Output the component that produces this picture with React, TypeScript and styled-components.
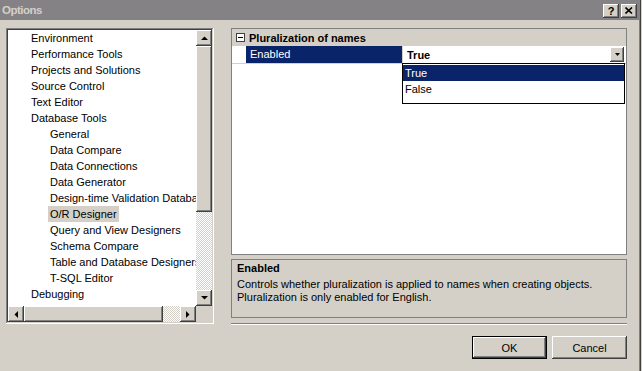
import styled, { createGlobalStyle } from "styled-components";

const GlobalStyle = createGlobalStyle`
  html, body {
    margin: 0;
    padding: 0;
    background: #d4d0c8;
  }
  body {
    font-family: "Liberation Sans", Arial, sans-serif;
    font-size: 11px;
    color: #000;
  }
`;

const raised = `
  background: #d4d0c8;
  box-shadow: inset -1px -1px #404040, inset 1px 1px #fff, inset -2px -2px #808080, inset 2px 2px #d4d0c8;
`;

const treeItems = [
    { label: "Environment", level: 0 },
    { label: "Performance Tools", level: 0 },
    { label: "Projects and Solutions", level: 0 },
    { label: "Source Control", level: 0 },
    { label: "Text Editor", level: 0 },
    { label: "Database Tools", level: 0 },
    { label: "General", level: 1 },
    { label: "Data Compare", level: 1 },
    { label: "Data Connections", level: 1 },
    { label: "Data Generator", level: 1 },
    { label: "Design-time Validation Database", level: 1 },
    { label: "O/R Designer", level: 1, selected: true },
    { label: "Query and View Designers", level: 1 },
    { label: "Schema Compare", level: 1 },
    { label: "Table and Database Designers", level: 1 },
    { label: "T-SQL Editor", level: 1 },
    { label: "Debugging", level: 0 },
];

function Arrow({ dir }: { dir: "up" | "down" | "left" | "right" }) {
    const pts = {
        up: "0,4 7,4 3.5,0.5",
        down: "0,0 7,0 3.5,3.5",
        left: "4,0 4,7 0.5,3.5",
        right: "0,0 0,7 3.5,3.5",
    }[dir];
    const vertical = dir === "up" || dir === "down";
    return (
        <svg width={vertical ? 7 : 4} height={vertical ? 4 : 7} viewBox={vertical ? "0 0 7 4" : "0 0 4 7"}>
            <polygon points={pts} fill="#000" />
        </svg>
    );
}

export default function App() {
    return (
        <>
            <GlobalStyle />
            <Window>
                <TitleBar>
                    <Title>Options</Title>
                    <CaptionButtons>
                        <CaptionButton>?</CaptionButton>
                        <CaptionButton>
                            <svg width="8" height="7" viewBox="0 0 8 7">
                                <path d="M0.5 0.5 L7 6.5 M7 0.5 L0.5 6.5" stroke="#000" strokeWidth="1.6" />
                            </svg>
                        </CaptionButton>
                    </CaptionButtons>
                </TitleBar>
                <Body>
                    <MainRow>
                        <TreeBox>
                            <TreeList>
                                {treeItems.map((item) => (
                                    <TreeRow key={item.label} $level={item.level}>
                                        <TreeLabel $selected={!!item.selected}>{item.label}</TreeLabel>
                                    </TreeRow>
                                ))}
                            </TreeList>
                            <VScroll>
                                <ScrollButton><Arrow dir="up" /></ScrollButton>
                                <VThumb />
                                <Track />
                                <ScrollButton><Arrow dir="down" /></ScrollButton>
                            </VScroll>
                            <HScroll>
                                <ScrollButton><Arrow dir="left" /></ScrollButton>
                                <HThumb />
                                <Track />
                                <ScrollButton><Arrow dir="right" /></ScrollButton>
                            </HScroll>
                            <Corner />
                        </TreeBox>
                        <RightColumn>
                            <PropertyGrid>
                                <CategoryRow>
                                    <Expander>
                                        <svg width="9" height="9" viewBox="0 0 9 9">
                                            <rect x="0.5" y="0.5" width="8" height="8" fill="#fff" stroke="#404040" />
                                            <path d="M2 4.5 H7" stroke="#000" />
                                        </svg>
                                    </Expander>
                                    <CategoryText>Pluralization of names</CategoryText>
                                </CategoryRow>
                                <PropertyRow>
                                    <Gutter />
                                    <NameCell>Enabled</NameCell>
                                    <ValueCell>
                                        <ValueText>True</ValueText>
                                        <DropButton>
                                            <svg width="5" height="3" viewBox="0 0 5 3">
                                                <polygon points="0,0 5,0 2.5,3" fill="#000" />
                                            </svg>
                                        </DropButton>
                                    </ValueCell>
                                </PropertyRow>
                                <DropList>
                                    <DropItem $selected>True</DropItem>
                                    <DropItem>False</DropItem>
                                </DropList>
                            </PropertyGrid>
                            <Description>
                                <DescTitle>Enabled</DescTitle>
                                <DescText>
                                    Controls whether pluralization is applied to names when creating objects.
                                    <br />
                                    Pluralization is only enabled for English.
                                </DescText>
                            </Description>
                            <Separator />
                        </RightColumn>
                    </MainRow>
                    <Footer>
                        <DialogButton $default>OK</DialogButton>
                        <DialogButton>Cancel</DialogButton>
                    </Footer>
                </Body>
            </Window>
        </>
    );
}

const Window = styled.div`
  width: 642px;
  height: 371px;
  display: flex;
  flex-direction: column;
  background: #d4d0c8;
  box-shadow: inset -1px 0 #d4d0c8, inset -2px 0 #404040, inset -3px 0 #808080;
  overflow: hidden;
`;

const TitleBar = styled.div`
  height: 20px;
  margin-right: 2px;
  background: #848284;
  display: flex;
  align-items: center;
  justify-content: space-between;
  padding: 0 3px 0 2px;
`;

const Title = styled.div`
  color: #d4d0c8;
  font-weight: bold;
  font-size: 11.5px;
  letter-spacing: -0.5px;
`;

const CaptionButtons = styled.div`
  display: flex;
  gap: 2px;
  padding-top: 1px;
`;

const CaptionButton = styled.div`
  ${raised}
  width: 16px;
  height: 14px;
  display: flex;
  align-items: center;
  justify-content: center;
  font-weight: bold;
  font-size: 11px;
  line-height: 14px;
`;

const Body = styled.div`
  display: flex;
  flex-direction: column;
  padding: 8px 0 0 6px;
`;

const MainRow = styled.div`
  display: flex;
  align-items: flex-start;
  gap: 17px;
`;

const TreeBox = styled.div`
  width: 208px;
  height: 296px;
  box-sizing: border-box;
  padding: 2px;
  background: #fff;
  box-shadow: inset -1px -1px #fff, inset 1px 1px #808080, inset -2px -2px #d4d0c8, inset 2px 2px #404040;
  display: grid;
  grid-template-columns: 1fr 16px;
  grid-template-rows: 1fr 16px;
`;

const TreeList = styled.div`
  overflow: hidden;
  white-space: nowrap;
`;

const TreeRow = styled.div<{ $level: number }>`
  height: 16px;
  display: flex;
  align-items: center;
  padding-left: ${(p) => (p.$level ? 40 : 21)}px;
`;

const TreeLabel = styled.span<{ $selected: boolean }>`
  padding: 0 2px;
  line-height: 16px;
  background: ${(p) => (p.$selected ? "#d4d0c8" : "transparent")};
`;

const VScroll = styled.div`
  display: flex;
  flex-direction: column;
`;

const HScroll = styled.div`
  display: flex;
`;

const ScrollButton = styled.div`
  ${raised}
  width: 16px;
  height: 16px;
  flex: none;
  display: flex;
  align-items: center;
  justify-content: center;
`;

const VThumb = styled.div`
  ${raised}
  height: 166px;
  flex: none;
`;

const HThumb = styled.div`
  ${raised}
  width: 139px;
  flex: none;
`;

const Track = styled.div`
  flex: 1;
  background-image: repeating-conic-gradient(#d4d0c8 0 25%, #fff 0 50%);
  background-size: 2px 2px;
`;

const Corner = styled.div`
  background: #d4d0c8;
`;

const RightColumn = styled.div`
  width: 396px;
  display: flex;
  flex-direction: column;
`;

const PropertyGrid = styled.div`
  position: relative;
  height: 227px;
  box-sizing: border-box;
  border: 1px solid #808080;
  background: #fff;
`;

const CategoryRow = styled.div`
  height: 17px;
  background: #d4d0c8;
  display: flex;
  align-items: center;
`;

const Expander = styled.div`
  width: 17px;
  display: flex;
  justify-content: center;
  align-items: center;
`;

const CategoryText = styled.span`
  font-weight: bold;
`;

const PropertyRow = styled.div`
  height: 17px;
  display: flex;
  border-bottom: 1px solid #d4d0c8;
`;

const Gutter = styled.div`
  width: 14px;
`;

const NameCell = styled.div`
  width: 156px;
  background: #0a246a;
  color: #fff;
  padding-left: 4px;
  box-sizing: border-box;
  line-height: 17px;
`;

const ValueCell = styled.div`
  flex: 1;
  border-left: 1px solid #d4d0c8;
  display: flex;
  align-items: center;
  justify-content: space-between;
  padding: 0 2px 0 4px;
`;

const ValueText = styled.span`
  font-weight: bold;
`;

const DropButton = styled.div`
  ${raised}
  width: 14px;
  height: 15px;
  display: flex;
  align-items: center;
  justify-content: center;
`;

const DropList = styled.div`
  position: absolute;
  left: 170px;
  top: 34px;
  width: 223px;
  height: 41px;
  box-sizing: border-box;
  border: 1px solid #000;
  background: #fff;
  padding: 1px 0;
`;

const DropItem = styled.div<{ $selected?: boolean }>`
  height: 16px;
  line-height: 16px;
  padding-left: 2px;
  background: ${(p) => (p.$selected ? "#0a246a" : "#fff")};
  color: ${(p) => (p.$selected ? "#fff" : "#000")};
`;

const Description = styled.div`
  margin-top: 4px;
  height: 59px;
  box-sizing: border-box;
  border: 1px solid #808080;
  padding: 1px 5px;
`;

const DescTitle = styled.div`
  font-weight: bold;
  line-height: 15px;
  margin-bottom: 2px;
`;

const DescText = styled.div`
  line-height: 13px;
`;

const Separator = styled.div`
  margin-top: 5px;
  height: 1px;
  background: #808080;
  border-bottom: 1px solid #fff;
`;

const Footer = styled.div`
  display: flex;
  justify-content: flex-end;
  gap: 5px;
  width: 621px;
  margin-top: 11px;
`;

const DialogButton = styled.div<{ $default?: boolean }>`
  ${raised}
  width: 75px;
  height: 23px;
  box-sizing: border-box;
  display: flex;
  align-items: center;
  justify-content: center;
  ${(p) =>
        p.$default &&
        `box-shadow: inset 0 0 0 1px #000, inset -2px -2px #404040, inset 2px 2px #fff, inset -3px -3px #808080;`}
`;
